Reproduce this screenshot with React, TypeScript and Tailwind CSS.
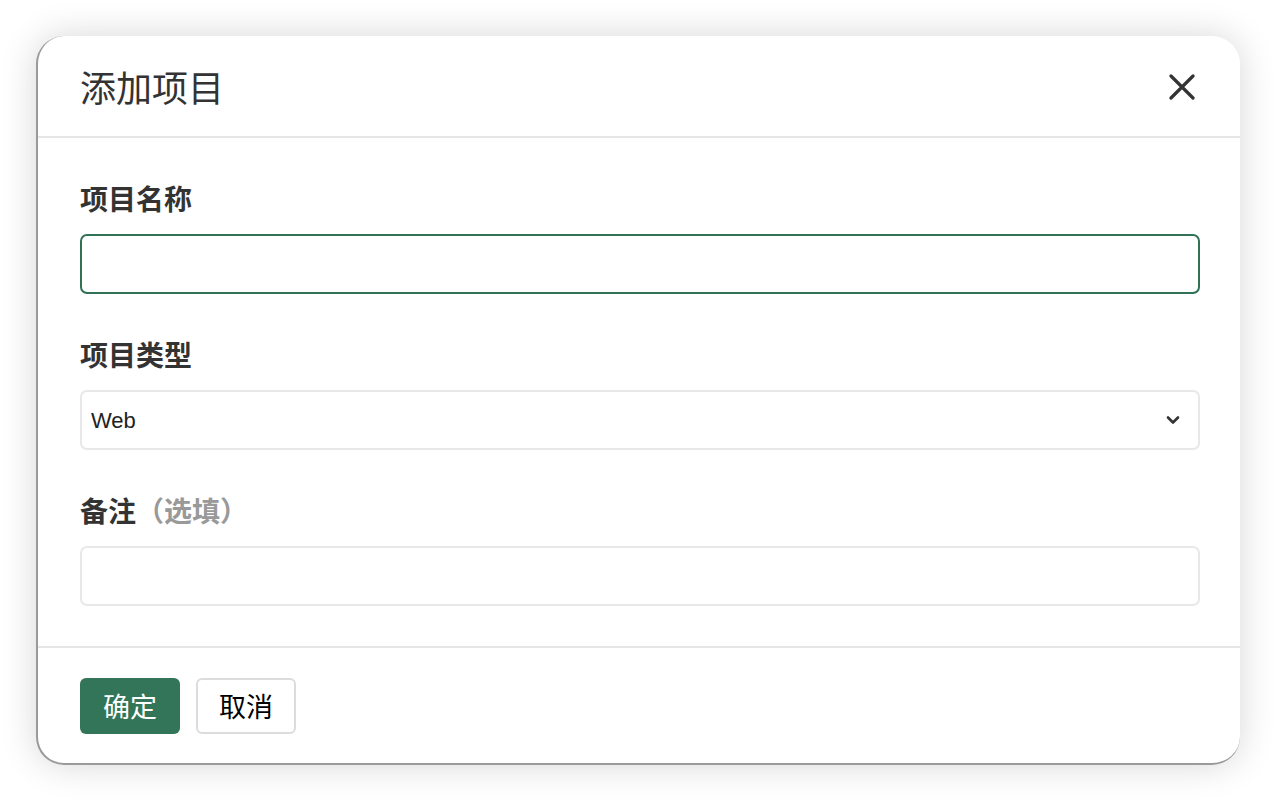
import React from "react";

const cjk = '"Noto Sans CJK SC", "Noto Sans", sans-serif';

export default function App() {
  return (
    <div className="w-[1276px] h-[802px] bg-white pt-[36px] pl-[36px] pr-[36px] pb-[37px]" style={{ fontFamily: cjk }}>
      <div className="w-[1204px] h-[729px] bg-white rounded-[28px] border-l-2 border-b-2 border-[#9a9a9a] shadow-[0_0_36px_rgba(0,0,0,0.16)] flex flex-col overflow-hidden">
        <div className="h-[102px] flex items-center justify-between pl-[42px] pr-[45px] border-b-2 border-[#e6e6e6] shrink-0">
          <h1 className="text-[36px] leading-none font-normal text-[#333]">添加项目</h1>
          <svg width="26" height="26" viewBox="0 0 26 26" className="mt-[2px]">
            <path d="M2 2 L24 24 M24 2 L2 24" stroke="#333" strokeWidth="3.2" strokeLinecap="round" />
          </svg>
        </div>
        <div className="flex-1 pl-[42px] pr-[40px] pt-[42px] flex flex-col">
          <label className="h-[36px] flex items-center text-[28px] font-bold text-[#333]">项目名称</label>
          <div className="mt-[18px] h-[60px] rounded-[7px] border-2 border-[#2f7255]" />
          <label className="mt-[42px] h-[36px] flex items-center text-[28px] font-bold text-[#333]">项目类型</label>
          <div className="mt-[18px] h-[60px] rounded-[7px] border-2 border-[#e8e8e8] flex items-center justify-between pl-[9px] pr-[18px]">
            <span className="text-[22px] text-[#222]" style={{ fontFamily: '"Liberation Sans", Arial, sans-serif' }}>Web</span>
            <svg width="14" height="10" viewBox="0 0 14 10">
              <path d="M2 2.5 L7 7.5 L12 2.5" stroke="#333" strokeWidth="2.6" fill="none" strokeLinecap="round" strokeLinejoin="round" />
            </svg>
          </div>
          <label className="mt-[42px] h-[36px] flex items-center text-[28px] font-bold text-[#333]">
            备注<span className="text-[#999]">（选填）</span>
          </label>
          <div className="mt-[18px] h-[60px] rounded-[7px] border-2 border-[#e8e8e8]" />
        </div>
        <div className="h-[117px] border-t-2 border-[#e6e6e6] pl-[42px] pt-[30px] flex gap-[16px] shrink-0">
          <button className="w-[100px] h-[56px] rounded-[6px] bg-[#337559] text-white text-[27px] flex items-center justify-center">确定</button>
          <button className="w-[100px] h-[56px] rounded-[6px] border-2 border-[#dcdcdc] bg-white text-black text-[27px] flex items-center justify-center">取消</button>
        </div>
      </div>
    </div>
  );
}
